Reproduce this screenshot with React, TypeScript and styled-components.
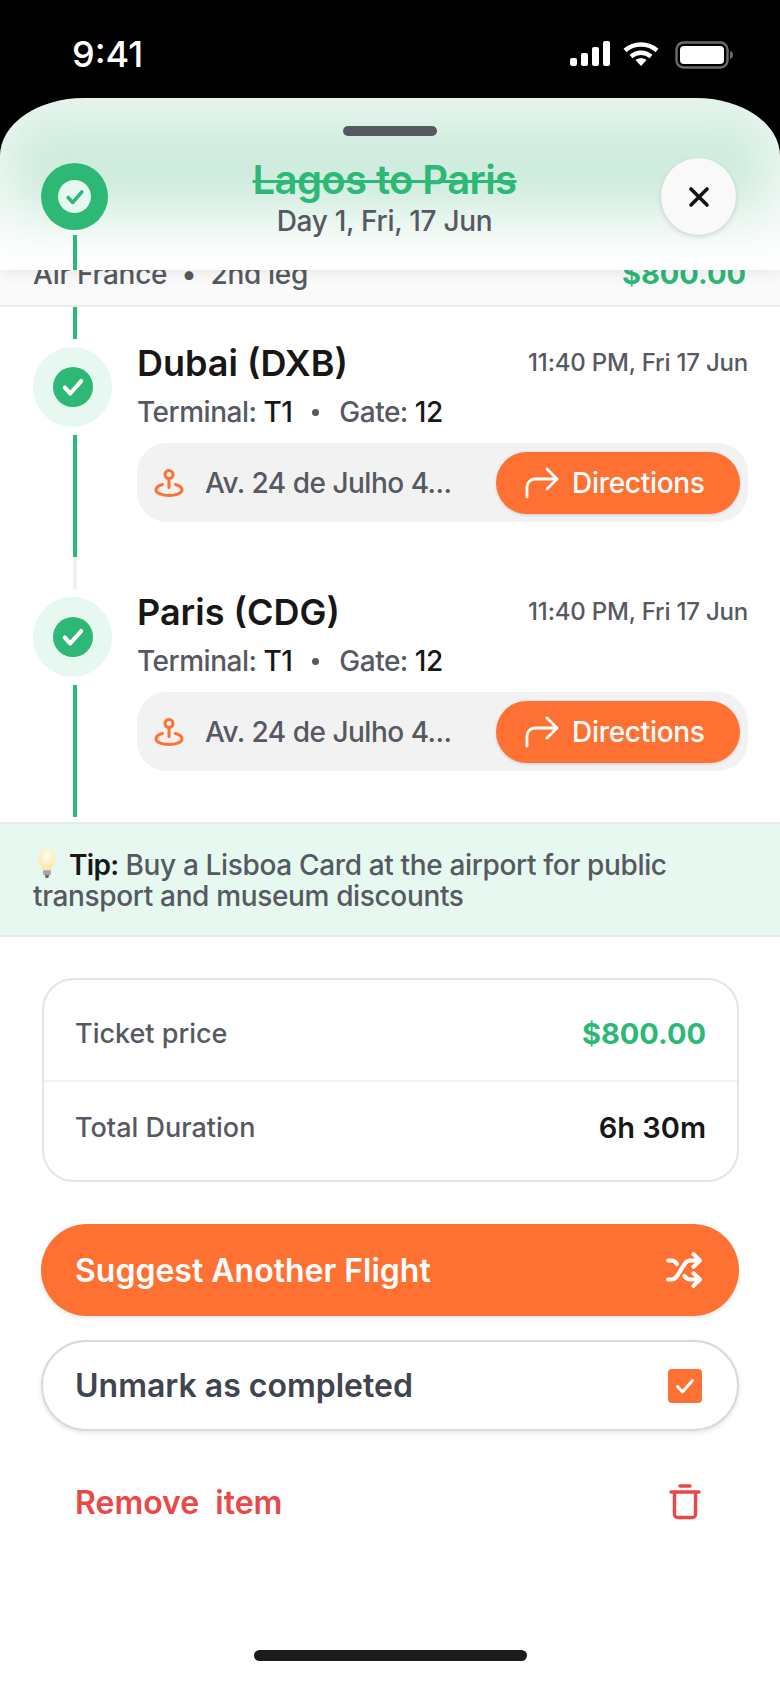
import React from "react";
import styled, { createGlobalStyle } from "styled-components";
import { Shuffle } from "lucide-react";

const GREEN = "#2db875";
const ORANGE = "#ff7033";
const GRAY = "#565962";
const INK = "#171717";
const RED = "#eb4747";

const Global = createGlobalStyle`
  html, body { margin: 0; padding: 0; background: #fff; }
  * { box-sizing: border-box; }
  body { font-family: Inter, "Liberation Sans", sans-serif; }
`;

const Page = styled.div`
  width: 780px;
  height: 1690px;
  overflow: hidden;
  background: #fff;
  display: flex;
  flex-direction: column;
`;

const StatusBar = styled.div`
  height: 98px;
  background: #000;
  color: #fff;
  display: flex;
  justify-content: space-between;
  padding: 34px 47px 0 72px;
`;
const Clock = styled.span`
  font-size: 36px;
  line-height: 40px;
  font-weight: 500;
`;
const StatusIcons = styled.div`
  display: flex;
  align-items: flex-start;
  gap: 13px;
  padding-top: 7px;
`;

const SheetWrap = styled.div`
  background: #000;
  position: relative;
  z-index: 2;
`;
const Header = styled.header`
  position: relative;
  height: 172px;
  background: linear-gradient(#eaf6f0 0, #ffffff 100%);
  border-radius: 84px 84px 0 0 / 58px 58px 0 0;
  overflow: hidden;
  box-shadow: 0 4px 14px rgba(0, 0, 0, 0.07);
  padding-top: 28px;
  &::before {
    content: "";
    position: absolute;
    left: 10px;
    right: 10px;
    top: 22px;
    height: 92px;
    background: #cdebdc;
    filter: blur(26px);
  }
`;
const Handle = styled.div`
  position: relative;
  width: 94px;
  height: 10px;
  margin: 0 auto;
  border-radius: 5px;
  background: ${GRAY};
`;
const HeaderRow = styled.div`
  position: relative;
  display: grid;
  grid-template-columns: 67px 1fr 75px;
  height: 112px;
  margin-top: 22px;
  padding: 0 44px 0 41px;
`;
const HeaderRail = styled.div`
  display: flex;
  flex-direction: column;
  align-items: center;
  padding-top: 5px;
  gap: 5px;
`;
const HeaderCheck = styled.div`
  width: 67px;
  height: 67px;
  flex: none;
  border-radius: 50%;
  background: ${GREEN};
  display: flex;
  align-items: center;
  justify-content: center;
`;
const HeaderCheckInner = styled.div`
  width: 33px;
  height: 33px;
  border-radius: 50%;
  background: #e6f8f0;
  display: flex;
  align-items: center;
  justify-content: center;
`;
const HeaderSeg = styled.div`
  width: 4px;
  flex: 1;
  background: ${GREEN};
`;
const HeaderTitles = styled.div`
  display: flex;
  flex-direction: column;
  align-items: center;
  padding-top: 1px;
`;
const Title = styled.h1`
  margin: 0;
  font-size: 40px;
  line-height: 42px;
  font-weight: 600;
  letter-spacing: -0.6px;
  color: ${GREEN};
  text-decoration: line-through;
  text-decoration-thickness: 3px;
`;
const DayLine = styled.div`
  margin-top: 3px;
  font-size: 28px;
  line-height: 34px;
  font-weight: 500;
  letter-spacing: -0.3px;
  color: ${GRAY};
`;
const CloseButton = styled.button`
  width: 75px;
  height: 77px;
  border: none;
  padding: 0;
  border-radius: 50%;
  background: #f9f9f9;
  box-shadow: 0 2px 5px rgba(0, 0, 0, 0.14);
  display: flex;
  align-items: center;
  justify-content: center;
`;

const PeekRow = styled.div`
  height: 37px;
  overflow: hidden;
  display: flex;
  justify-content: space-between;
  align-items: flex-end;
  padding: 0 34px 15px 33px;
  background: #fafafa;
  border-bottom: 2px solid #ececec;
  font-size: 28px;
  font-weight: 500;
  letter-spacing: -0.3px;
  color: ${GRAY};
`;
const PeekText = styled.span`
  line-height: 32px;
  flex: none;
  white-space: pre;
`;
const PeekPrice = styled.span`
  line-height: 32px;
  flex: none;
  font-size: 29px;
  letter-spacing: 0;
  font-weight: 700;
  color: ${GREEN};
`;

const Stop = styled.section`
  display: flex;
  padding: 0 32px 0 33px;
`;
const Rail = styled.div<{ $top: number }>`
  width: 80px;
  flex: none;
  display: flex;
  flex-direction: column;
  align-items: flex-start;
  padding-top: ${(p) => p.$top}px;
`;
const Seg = styled.div<{ $tone?: "green" | "gray"; $h?: number }>`
  width: 4px;
  margin-left: 40px;
  background: ${(p) => (p.$tone === "gray" ? "#f1f1f1" : GREEN)};
  flex: ${(p) => (p.$h === undefined ? "1" : `0 0 ${p.$h}px`)};
`;
const RailLine = styled.div`
  flex: 1;
  display: flex;
  flex-direction: column;
  margin-top: 8px;
`;
const RailLead = styled(Seg)`
  margin-bottom: 8px;
`;
const Node = styled.div`
  width: 79px;
  height: 80px;
  flex: none;
  border-radius: 50%;
  background: #e6f8f0;
  display: flex;
  align-items: center;
  justify-content: center;
`;
const NodeDot = styled.div`
  width: 40px;
  height: 40px;
  border-radius: 50%;
  background: ${GREEN};
  display: flex;
  align-items: center;
  justify-content: center;
`;
const StopBody = styled.div<{ $top: number; $bottom: number }>`
  flex: 1;
  min-width: 0;
  margin-left: 24px;
  padding: ${(p) => p.$top}px 0 ${(p) => p.$bottom}px;
`;
const StopHead = styled.div`
  display: flex;
  justify-content: space-between;
  align-items: center;
  height: 40px;
`;
const Place = styled.h2`
  margin: 0;
  font-size: 36px;
  line-height: 40px;
  font-weight: 600;
  color: ${INK};
`;
const Time = styled.span`
  font-size: 24px;
  line-height: 32px;
  font-weight: 500;
  letter-spacing: -0.2px;
  color: ${GRAY};
`;
const Gates = styled.div`
  display: flex;
  align-items: center;
  margin-top: 13px;
  height: 32px;
  font-size: 28px;
  font-weight: 500;
  letter-spacing: -0.5px;
  color: ${GRAY};
  white-space: pre;
`;
const Strong = styled.span`
  color: ${INK};
`;
const Dot = styled.i`
  display: inline-block;
  width: 7px;
  height: 7px;
  border-radius: 50%;
  background: ${GRAY};
  margin: 0 20px 0 20px;
`;
const AddressPill = styled.div`
  margin-top: 15px;
  height: 79px;
  border-radius: 30px;
  background: #f2f2f2;
  display: flex;
  align-items: center;
  padding: 0 8px 0 17px;
`;
const Address = styled.span`
  flex: 1;
  margin-left: 21px;
  font-size: 28px;
  font-weight: 500;
  letter-spacing: -0.5px;
  color: ${GRAY};
  white-space: nowrap;
`;
const DirectionsButton = styled.button`
  width: 244px;
  height: 62px;
  border: none;
  border-radius: 31px;
  background: ${ORANGE};
  box-shadow: 0 1px 3px rgba(0, 0, 0, 0.16);
  color: #fff;
  font: 500 28px Inter, sans-serif;
  letter-spacing: -0.3px;
  display: flex;
  align-items: center;
  padding: 0 0 0 29px;
  gap: 13px;
`;

const Tip = styled.aside`
  margin-top: 5px;
  height: 115px;
  background: #e6f8f0;
  border-top: 2px solid #dfefe8;
  border-bottom: 2px solid #dfefe8;
  padding: 25px 33px 0;
  font-size: 28px;
  line-height: 31px;
  font-weight: 500;
  letter-spacing: -0.35px;
  color: ${GRAY};
`;
const TipLabel = styled.b`
  font-weight: 600;
  letter-spacing: -0.7px;
  color: ${INK};
`;
const Bulb = styled.svg`
  display: inline-block;
  vertical-align: -3px;
  margin: 0 13px 0 5px;
`;

const Actions = styled.div`
  padding: 41px 41px 0;
  display: flex;
  flex-direction: column;
`;
const SummaryCard = styled.div`
  height: 204px;
  margin: 0 0 0 1px;
  border: 2px solid #e5e5e5;
  border-radius: 32px;
  display: flex;
  flex-direction: column;
`;
const SummaryRow = styled.div<{ $shift: number }>`
  flex: 1;
  display: flex;
  justify-content: space-between;
  align-items: center;
  padding: ${(p) => (p.$shift > 0 ? p.$shift : 0)}px 31px ${(p) => (p.$shift < 0 ? -p.$shift : 0)}px 31px;
  font-size: 27px;
  font-weight: 500;
  color: ${GRAY};
  & + & {
    border-top: 2px solid #f1f1f1;
  }
`;
const SummaryValue = styled.span<{ $green?: boolean }>`
  font-size: 29px;
  font-weight: ${(p) => (p.$green ? 700 : 600)};
  color: ${(p) => (p.$green ? GREEN : INK)};
`;
const ActionButton = styled.button<{ $kind: "primary" | "outline" | "danger" }>`
  height: ${(p) => (p.$kind === "outline" ? 91 : 92)}px;
  margin-top: ${(p) => (p.$kind === "primary" ? 42 : p.$kind === "outline" ? 24 : 25)}px;
  border: ${(p) => (p.$kind === "outline" ? "2px solid #d9dae0" : "none")};
  border-radius: 46px;
  background: ${(p) =>
    p.$kind === "primary" ? ORANGE : p.$kind === "outline" ? "#fff" : "transparent"};
  box-shadow: ${(p) =>
    p.$kind === "danger" ? "none" : "0 2px 4px rgba(0, 0, 0, 0.1)"};
  color: ${(p) =>
    p.$kind === "primary" ? "#fff" : p.$kind === "outline" ? "#40444f" : RED};
  font: 600 32px Inter, sans-serif;
  display: flex;
  align-items: center;
  justify-content: space-between;
  padding: 0 ${(p) => (p.$kind === "outline" ? 35 : 36)}px 0 ${(p) => (p.$kind === "outline" ? 32 : 34)}px;
  white-space: pre;
`;
const CheckBox = styled.span`
  width: 34px;
  height: 34px;
  border-radius: 4px;
  background: ${ORANGE};
  display: flex;
  align-items: center;
  justify-content: center;
`;
const HomeIndicator = styled.div`
  width: 273px;
  height: 11px;
  border-radius: 6px;
  background: #1c1c1c;
  margin: 102px auto 0;
`;

const Tick = ({ size, color, width = 3 }: { size: number; color: string; width?: number }) => (
  <svg width={size} height={size} viewBox="0 0 24 24" fill="none">
    <path d="M4.5 12.5l5 5.5L19.5 6.5" stroke={color} strokeWidth={width} strokeLinecap="round" strokeLinejoin="round" />
  </svg>
);

const PinIcon = () => (
  <svg width="30" height="30" viewBox="0 0 30 30" fill="none" stroke={ORANGE} strokeWidth="3" strokeLinecap="round">
    <circle cx="15" cy="6.5" r="4" />
    <path d="M15 10.5v9" />
    <path d="M8.500 16.500C4.500 17.600 2 19.700 2 22c0 3 5.800 5.500 13 5.500S28 25 28 22c0-2.300-2.500-4.400-6.500-5.500" />
  </svg>
);

const TurnIcon = () => (
  <svg width="34" height="32" viewBox="0 0 34 32" fill="none" stroke="#fff" strokeWidth="2.8" strokeLinecap="round" strokeLinejoin="round">
    <path d="M2 30V20a8 8 0 0 1 8-8h22" />
    <path d="M22 2l10 10-10 10" />
  </svg>
);

const TrashGlyph = styled.svg`
  margin-right: 2px;
`;
const TrashIcon = () => (
  <TrashGlyph width="32" height="36" viewBox="0 0 32 36" fill="none" stroke={RED} strokeWidth="3.4" strokeLinecap="round" strokeLinejoin="round">
    <path d="M11 2h10" />
    <path d="M2 8h28" />
    <path d="M5.500 8.500v22a3 3 0 0 0 3 3h15a3 3 0 0 0 3-3v-22" />
  </TrashGlyph>
);

const SignalIcon = () => (
  <svg width="40" height="26" viewBox="0 0 40 26" fill="#fff">
    <rect x="0" y="17" width="7" height="8" rx="2" />
    <rect x="11" y="12" width="7" height="13" rx="2" />
    <rect x="22" y="6" width="7" height="19" rx="2" />
    <rect x="33" y="0" width="7" height="25" rx="2" />
  </svg>
);
const WifiIcon = () => (
  <svg width="36" height="26" viewBox="0 0 36 26" fill="none" stroke="#fff" strokeWidth="4.4">
    <path d="M2 9.500C11 1.500 25 1.500 34 9.500" />
    <path d="M8 15.500c6-5 14-5 20 0" />
    <path d="M18 25l-5.500-6c3-2.300 8-2.300 11 0z" fill="#fff" stroke="none" />
  </svg>
);
const BatteryIcon = () => (
  <svg width="61" height="28" viewBox="-3 0 61 28" fill="none">
    <rect x="1.500" y="1.500" width="51" height="25" rx="7" stroke="#6a6a6a" strokeWidth="2.4" />
    <rect x="5" y="5" width="44" height="18" rx="4" fill="#fff" />
    <path d="M55 10c2 .6 3 2 3 4s-1 3.400-3 4z" fill="#6a6a6a" />
  </svg>
);
const BulbIcon = () => (
  <Bulb width="18" height="29" viewBox="0 0 21 30" preserveAspectRatio="none">
    <defs>
      <radialGradient id="glass" cx="50%" cy="35%" r="60%">
        <stop offset="0%" stopColor="#fffef5" />
        <stop offset="100%" stopColor="#fbe7a0" />
      </radialGradient>
    </defs>
    <path d="M10.500 0C4.700 0 .5 4.300.5 9.800c0 4.700 4 7.200 5 12.200h10c1-5 5-7.500 5-12.200C20.500 4.300 16.300 0 10.500 0z" fill="url(#glass)" />
    <rect x="6" y="22" width="9" height="5" rx="1" fill="#a5a5a5" />
    <path d="M8 27h5l-1 3H9z" fill="#666" />
  </Bulb>
);

const stops = [
  { place: "Dubai (DXB)", first: true },
  { place: "Paris (CDG)", first: false },
];

export default function App() {
  return (
    <Page>
      <Global />
      <StatusBar>
        <Clock>9:41</Clock>
        <StatusIcons>
          <SignalIcon />
          <WifiIcon />
          <BatteryIcon />
        </StatusIcons>
      </StatusBar>
      <SheetWrap>
        <Header>
          <Handle />
          <HeaderRow>
            <HeaderRail>
              <HeaderCheck>
                <HeaderCheckInner>
                  <Tick size={22} color={GREEN} width={3.8} />
                </HeaderCheckInner>
              </HeaderCheck>
              <HeaderSeg />
            </HeaderRail>
            <HeaderTitles>
              <Title>Lagos to Paris</Title>
              <DayLine>Day 1, Fri, 17 Jun</DayLine>
            </HeaderTitles>
            <CloseButton aria-label="Close">
              <svg width="22" height="22" viewBox="0 0 22 22" stroke="#111" strokeWidth="3.6" strokeLinecap="round">
                <path d="M3 3l16 16M19 3L3 19" />
              </svg>
            </CloseButton>
          </HeaderRow>
        </Header>
      </SheetWrap>
      <PeekRow>
        <PeekText>Air France  •  2nd leg</PeekText>
        <PeekPrice>$800.00</PeekPrice>
      </PeekRow>
      {stops.map((s) => (
        <Stop key={s.place}>
          <Rail $top={s.first ? 0 : 8}>
            {s.first && <RailLead $h={32} />}
            <Node>
              <NodeDot>
                <Tick size={26} color="#fff" width={3.8} />
              </NodeDot>
            </Node>
            <RailLine>
              <Seg />
              {s.first && <Seg $tone="gray" $h={32} />}
            </RailLine>
          </Rail>
          <StopBody $top={s.first ? 36 : 3} $bottom={s.first ? 67 : 46}>
            <StopHead>
              <Place>{s.place}</Place>
              <Time>11:40 PM, Fri 17 Jun</Time>
            </StopHead>
            <Gates>
              Terminal: <Strong>T1</Strong>
              <Dot />
              Gate: <Strong>12</Strong>
            </Gates>
            <AddressPill>
              <PinIcon />
              <Address>Av. 24 de Julho 4...</Address>
              <DirectionsButton>
                <TurnIcon />
                Directions
              </DirectionsButton>
            </AddressPill>
          </StopBody>
        </Stop>
      ))}
      <Tip>
        <BulbIcon />
        <TipLabel>Tip:</TipLabel> Buy a Lisboa Card at the airport for public transport and museum discounts
      </Tip>
      <Actions>
        <SummaryCard>
          <SummaryRow $shift={7}>
            Ticket price
            <SummaryValue $green>$800.00</SummaryValue>
          </SummaryRow>
          <SummaryRow $shift={-6}>
            Total Duration
            <SummaryValue>6h 30m</SummaryValue>
          </SummaryRow>
        </SummaryCard>
        <ActionButton $kind="primary">
          Suggest Another Flight
          <Shuffle size={38} strokeWidth={2.6} color="#fff" />
        </ActionButton>
        <ActionButton $kind="outline">
          Unmark as completed
          <CheckBox>
            <Tick size={24} color="#fff" width={3} />
          </CheckBox>
        </ActionButton>
        <ActionButton $kind="danger">
          Remove  item
          <TrashIcon />
        </ActionButton>
      </Actions>
      <HomeIndicator />
    </Page>
  );
}
